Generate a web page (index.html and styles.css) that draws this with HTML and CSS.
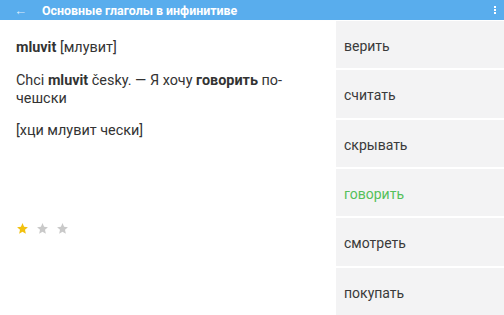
FILE: index.html
```html
<!DOCTYPE html>
<html lang="ru">
<head>
    <meta charset="UTF-8">
    <meta name="viewport" content="width=device-width, initial-scale=1.0">
    <title>Основные глаголы в инфинитиве</title>
    <link rel="stylesheet" href="styles.css">
</head>
<body>
    <header class="toolbar">
        <span class="back">&larr;</span>
        <h1 class="title">Основные глаголы в инфинитиве</h1>
        <span class="menu"><i></i><i></i><i></i></span>
    </header>
    <main class="content">
        <section class="card">
            <p class="word"><b>mluvit</b> [млувит]</p>
            <p class="example">Chci <b>mluvit</b> česky. — Я хочу <b>говорить</b> по-чешски</p>
            <p class="transcript">[хци млувит чески]</p>
            <div class="stars">
                <svg viewBox="0 0 24 24" class="star on"><path d="M12 2l2.9 6.9 7.1.6-5.4 4.7 1.6 7.3L12 17.8 5.8 21.5l1.6-7.3L2 9.5l7.1-.6z"/></svg>
                <svg viewBox="0 0 24 24" class="star"><path d="M12 2l2.9 6.9 7.1.6-5.4 4.7 1.6 7.3L12 17.8 5.8 21.5l1.6-7.3L2 9.5l7.1-.6z"/></svg>
                <svg viewBox="0 0 24 24" class="star"><path d="M12 2l2.9 6.9 7.1.6-5.4 4.7 1.6 7.3L12 17.8 5.8 21.5l1.6-7.3L2 9.5l7.1-.6z"/></svg>
            </div>
        </section>
        <aside class="answers">
            <button class="answer">верить</button>
            <button class="answer">считать</button>
            <button class="answer">скрывать</button>
            <button class="answer correct">говорить</button>
            <button class="answer">смотреть</button>
            <button class="answer">покупать</button>
        </aside>
    </main>
</body>
</html>
```

FILE: styles.css
```css
body {
    margin: 0;
    padding: 0;
    width: 504px;
    height: 315px;
    overflow: hidden;
    font-family: Roboto, "Noto Sans", sans-serif;
    color: #333;
    background: #fff;
    display: flex;
    flex-direction: column;
}
.toolbar {
    height: 20px;
    background-color: #59aded;
    color: #fff;
    display: flex;
    align-items: center;
    flex-shrink: 0;
}
.back {
    width: 42px;
    padding-left: 14px;
    box-sizing: border-box;
    font-size: 13px;
    color: #dcecfb;
}
.title {
    flex: 1;
    margin: 0;
    font-size: 12.4px;
    font-weight: bold;
}
.menu {
    width: 18px;
    display: flex;
    flex-direction: column;
    align-items: center;
    gap: 1px;
}
.menu i {
    width: 2px;
    height: 2px;
    background: #fff;
}
.content {
    flex: 1;
    display: flex;
}
.card {
    width: 336px;
    padding: 18px 16px 0;
    box-sizing: border-box;
    font-size: 14.4px;
    line-height: 18px;
}
.card p {
    margin: 0 0 14px;
}
.word {
    padding-top: 1px;
}
.example {
    padding-top: 1px;
    padding-right: 30px;
}
.stars {
    display: flex;
    gap: 7px;
    margin-top: 82px;
}
.star {
    width: 13px;
    height: 13px;
    fill: #c9c9c9;
}
.star.on {
    fill: #f2c10f;
}
.answers {
    flex: 1;
    display: flex;
    flex-direction: column;
    gap: 2px;
    padding-top: 1px;
}
.answer {
    flex: 1;
    border: none;
    background: #f3f3f4;
    text-align: left;
    padding: 3px 0 0 8px;
    font-family: Roboto, "Noto Sans", sans-serif;
    font-size: 14px;
    color: #3a3a3a;
}
.answer.correct {
    color: #55c05a;
}
```
